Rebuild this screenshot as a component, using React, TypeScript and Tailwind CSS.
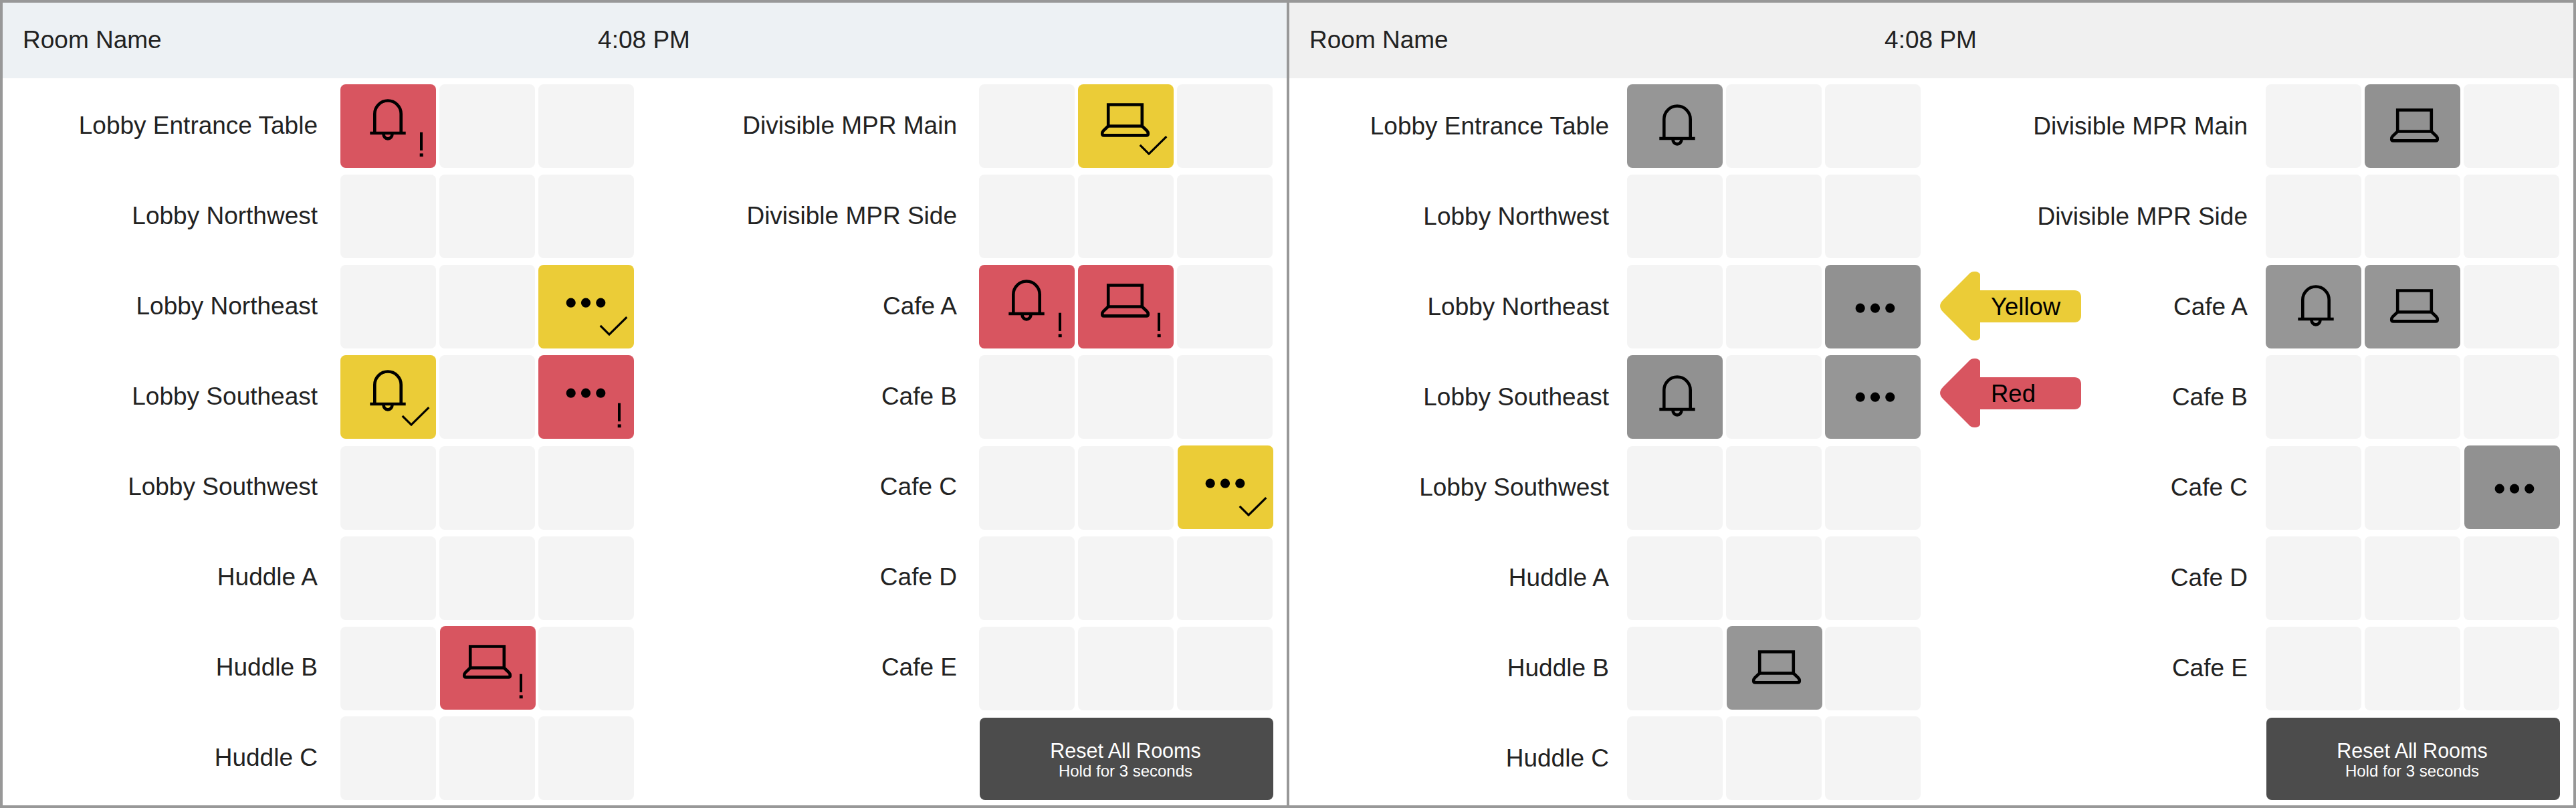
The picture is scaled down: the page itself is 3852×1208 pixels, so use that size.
import { clsx } from "clsx";

type IconName = "bell" | "laptop" | "dots";
type Status = "red" | "yellow" | "idle" | "idleDark";

type CellData = {
  col: number;
  icon: IconName;
  status: Status;
  iconShift?: number;
};

type Callout = { text: string; tone: "yellow" | "red" };

type RoomRow = {
  name: string;
  cells?: CellData[];
  callout?: Callout;
};

type PanelData = {
  muted?: boolean;
  left: RoomRow[];
  right: RoomRow[];
};

const STATUS_BG: Record<Status | "empty", string> = {
  empty: "bg-[#f4f4f4]",
  red: "bg-[#d85560]",
  yellow: "bg-[#ebcc37]",
  idle: "bg-[#969696]",
  idleDark: "bg-[#919191]",
};

const ACTIVE_PANEL: PanelData = {
  left: [
    { name: "Lobby Entrance Table", cells: [{ col: 0, icon: "bell", status: "red" }] },
    { name: "Lobby Northwest" },
    { name: "Lobby Northeast", cells: [{ col: 2, icon: "dots", status: "yellow" }] },
    {
      name: "Lobby Southeast",
      cells: [
        { col: 0, icon: "bell", status: "yellow" },
        { col: 2, icon: "dots", status: "red" },
      ],
    },
    { name: "Lobby Southwest" },
    { name: "Huddle A" },
    { name: "Huddle B", cells: [{ col: 1, icon: "laptop", status: "red" }] },
    { name: "Huddle C" },
  ],
  right: [
    { name: "Divisible MPR Main", cells: [{ col: 1, icon: "laptop", status: "yellow" }] },
    { name: "Divisible MPR Side" },
    {
      name: "Cafe A",
      cells: [
        { col: 0, icon: "bell", status: "red" },
        { col: 1, icon: "laptop", status: "red" },
      ],
    },
    { name: "Cafe B" },
    { name: "Cafe C", cells: [{ col: 2, icon: "dots", status: "yellow" }] },
    { name: "Cafe D" },
    { name: "Cafe E" },
  ],
};

const MUTED_PANEL: PanelData = {
  muted: true,
  left: [
    { name: "Lobby Entrance Table", cells: [{ col: 0, icon: "bell", status: "idle" }] },
    { name: "Lobby Northwest" },
    {
      name: "Lobby Northeast",
      cells: [{ col: 2, icon: "dots", status: "idleDark" }],
      callout: { text: "Yellow", tone: "yellow" },
    },
    {
      name: "Lobby Southeast",
      cells: [
        { col: 0, icon: "bell", status: "idleDark" },
        { col: 2, icon: "dots", status: "idle", iconShift: -2 },
      ],
      callout: { text: "Red", tone: "red" },
    },
    { name: "Lobby Southwest" },
    { name: "Huddle A" },
    { name: "Huddle B", cells: [{ col: 1, icon: "laptop", status: "idle" }] },
    { name: "Huddle C" },
  ],
  right: [
    { name: "Divisible MPR Main", cells: [{ col: 1, icon: "laptop", status: "idleDark" }] },
    { name: "Divisible MPR Side" },
    {
      name: "Cafe A",
      cells: [
        { col: 0, icon: "bell", status: "idle" },
        { col: 1, icon: "laptop", status: "idle" },
      ],
    },
    { name: "Cafe B" },
    { name: "Cafe C", cells: [{ col: 2, icon: "dots", status: "idleDark" }] },
    { name: "Cafe D" },
    { name: "Cafe E" },
  ],
};

function IconShape({ icon }: { icon: IconName }) {
  if (icon === "bell") {
    return (
      <g fill="none" stroke="#000" strokeWidth="4.6">
        <path d="M51.3 73V44.2a19.7 19.7 0 0 1 39.4 0V73" />
        <path d="M44.3 73H97.7" />
        <path d="M64.5 74.5a6.5 6.9 0 0 0 13 0" />
      </g>
    );
  }

  if (icon === "laptop") {
    return (
      <g fill="none" stroke="#000" strokeWidth="4.6">
        <path d="M45.2 62.5V30.5H95.8V62.5Z" />
        <path d="M45.2 62.5L38 69.4C36.6 70.8 36.2 72.2 36.2 74C36.2 75.7 37 76.4 38.6 76.4H102.4C104 76.4 104.8 75.7 104.8 74C104.8 72.2 104.4 70.8 103 69.4L95.8 62.5" />
      </g>
    );
  }

  return (
    <g fill="#000">
      <circle cx="48.7" cy="56.7" r="7.1" />
      <circle cx="71" cy="56.7" r="7.1" />
      <circle cx="93.3" cy="56.7" r="7.1" />
    </g>
  );
}

function StatusMark({ status }: { status: Status }) {
  if (status === "yellow") {
    return (
      <path
        d="M92.7 90.8L106 104.1L132.3 78.2"
        fill="none"
        stroke="#000"
        strokeWidth="3.2"
      />
    );
  }

  if (status === "red") {
    return (
      <g fill="#000">
        <rect x="119" y="71.7" width="4" height="27.2" />
        <rect x="118.7" y="103.4" width="5" height="4.8" />
      </g>
    );
  }

  return null;
}

function Cell({ cell, lowered }: { cell?: CellData; lowered: boolean }) {
  if (!cell) {
    return <div className={clsx("h-[125px] w-[143px] rounded-lg", STATUS_BG.empty)} />;
  }

  const idle = cell.status === "idle" || cell.status === "idleDark";
  const dx = idle ? 4 : 0;
  const dy = (idle ? 8 : 0) + (cell.iconShift ?? 0);

  return (
    <div
      className={clsx(
        "h-[125px] w-[143px] rounded-lg",
        STATUS_BG[cell.status],
        lowered && "translate-x-px -translate-y-px",
      )}
    >
      <svg width="143" height="125" viewBox="0 0 143 125">
        <g transform={`translate(${dx} ${dy})`}>
          <IconShape icon={cell.icon} />
        </g>
        <StatusMark status={cell.status} />
      </svg>
    </div>
  );
}

function CalloutArrow({ text, tone }: Callout) {
  return (
    <div
      className={clsx(
        "relative ml-[29px] h-[103px] w-[211px] shrink-0",
        tone === "yellow" ? "mt-[10px] text-[#ebcc37]" : "mt-[5px] text-[#d85560]",
      )}
    >
      <svg width="211" height="103" viewBox="0 0 211 103" fill="currentColor">
        <path d="M60 28V5C60 2 56 0 51.5 0C48 0 45 1.6 43 4L5 42C-1.6 48.5 -1.6 54.5 5 61L43 99C45 101.4 48 103 51.5 103C56 103 60 101 60 98V76H201C207 76 211 72 211 66V38C211 32 207 28 201 28Z" />
      </svg>
      <span className="absolute top-0 left-[76px] text-[36.5px] leading-[106px] text-black">
        {text}
      </span>
    </div>
  );
}

function Row({
  row,
  index,
  labelClass,
}: {
  row: RoomRow;
  index: number;
  labelClass: string;
}) {
  const lowered = index >= 4 && index <= 6;

  return (
    <div className="flex h-[125px] items-start">
      <div className={clsx("shrink-0 text-right whitespace-nowrap", labelClass)}>
        {row.name}
      </div>
      <div className={clsx("flex shrink-0 gap-[5px]", lowered && "mt-px")}>
        {[0, 1, 2].map((col) => (
          <Cell
            key={col}
            cell={row.cells?.find((c) => c.col === col)}
            lowered={lowered}
          />
        ))}
      </div>
      {row.callout ? <CalloutArrow {...row.callout} /> : null}
    </div>
  );
}

function Panel({ muted, left, right }: PanelData) {
  const leading = muted ? "leading-[125px]" : "leading-[123px]";

  return (
    <section className="w-[1920px] shrink-0 bg-white text-[37px] text-[#222]">
      <header
        className={clsx(
          "flex h-[113px] pr-[32px] pl-[30px] leading-[112px]",
          muted ? "bg-[#f0f0f0]" : "bg-[#edf1f4]",
        )}
      >
        <h1 className="flex-1">Room Name</h1>
        <span>4:08 PM</span>
        <div className="flex-1" />
      </header>

      <div className="flex pt-[9px]">
        <div className="flex w-[944px] shrink-0 flex-col gap-[10px]">
          {left.map((row, i) => (
            <Row
              key={row.name}
              row={row}
              index={i}
              labelClass={clsx("w-[505px]", leading, muted ? "pr-[27px]" : "pr-[34px]")}
            />
          ))}
        </div>

        <div className="flex w-[955px] shrink-0 flex-col gap-[10px]">
          {right.map((row, i) => (
            <Row
              key={row.name}
              row={row}
              index={i}
              labelClass={clsx("w-[516px]", leading, muted ? "pr-[27px]" : "pr-[33px]")}
            />
          ))}
          <button className="mt-[2px] -mr-px ml-auto flex h-[123px] w-[439px] flex-col items-center justify-center rounded-lg bg-[#4c4c4c] pt-[3px] pr-[3px] text-white">
            <span className="text-[30.5px] leading-[34px]">Reset All Rooms</span>
            <span className="text-2xl leading-[28px]">Hold for 3 seconds</span>
          </button>
        </div>
      </div>
    </section>
  );
}

export default function App() {
  return (
    <main className="flex h-[1208px] w-[3852px] gap-1 overflow-hidden bg-[#989898] p-1 font-['Liberation_Sans',Arial,sans-serif]">
      <Panel {...ACTIVE_PANEL} />
      <Panel {...MUTED_PANEL} />
    </main>
  );
}
